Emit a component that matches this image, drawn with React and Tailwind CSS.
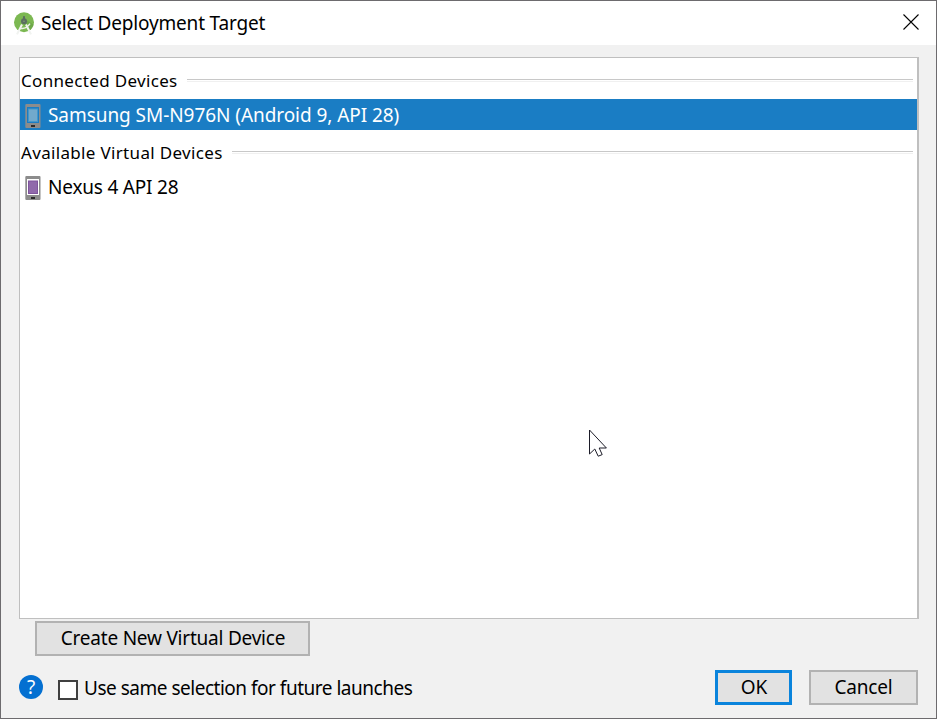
import React from "react";

function StudioLogo() {
  return (
    <svg width="20" height="23" viewBox="0 0 20 23" className="block shrink-0">
      <circle cx="10" cy="10.2" r="10" fill="#7cb852" />
      <path d="M12 8 L19.6 12.5 A10 10 0 0 1 15.5 18.5 L10 13Z" fill="#659f45" opacity="0.6" />
      <path d="M8 12.5 L3 22.4 M12 12.5 L17 22.4" stroke="#f1f3f0" strokeWidth="2.1" fill="none" />
      <path d="M6 16.2 Q12 17.5 16 11.6" stroke="#eef3ea" strokeWidth="1.5" fill="none" />
      <rect x="9" y="4.2" width="2" height="3" fill="#5b6e60" />
      <circle cx="10" cy="9.2" r="3" fill="#5b6e60" />
      <circle cx="10" cy="9.2" r="0.8" fill="#7f9a78" />
    </svg>
  );
}

function PhoneIcon({ bezel, screen, edge }) {
  return (
    <svg width="16" height="24" viewBox="0 0 16 24" className="mt-[2px] block shrink-0">
      <rect x="0.3" y="0" width="15.2" height="24" rx="1" fill="#8c8c8c" />
      <rect x="2" y="3" width="12" height="16" fill={bezel} />
      <rect x="3" y="4.5" width="10" height="13.5" fill={edge} />
      <rect x="4" y="5.5" width="8" height="11.5" fill={screen} />
      <rect x="6" y="21" width="4" height="2" fill="#2b2b2b" />
    </svg>
  );
}

function SectionHeader({ className, children }) {
  return (
    <div className="flex h-[41px] items-center pl-[1px] pr-[4px]">
      <span className={className}>{children}</span>
      <div className="mt-[3px] h-[3px] flex-1 border-t border-b border-t-[#c8c8c8] border-b-[#f0f0f0]" />
    </div>
  );
}

export default function App() {
  return (
    <div className="relative flex h-[719px] w-[937px] flex-col overflow-hidden border border-[#6d6b6e] bg-[#f1f1f1] font-['Noto_Sans','Open_Sans',sans-serif] text-[19px] leading-[24px] whitespace-nowrap text-black">
      <header className="flex h-[44px] shrink-0 items-center bg-white pr-[17px] pl-[13px]">
        <StudioLogo />
        <h1 className="-mt-[1px] ml-[7px] flex-1 tracking-[-0.17px]">Select Deployment Target</h1>
        <svg width="16" height="16" viewBox="0 0 16 16" className="-mt-[2px] block">
          <path d="M0.5 0.5 L15.5 15.5 M15.5 0.5 L0.5 15.5" stroke="#000" strokeWidth="1.1" />
        </svg>
      </header>

      <main className="mt-[12px] ml-[18px] h-[562px] w-[900px] shrink-0 border border-r-2 border-[#bfbfbf] bg-white">
        <SectionHeader className="mt-[5px] w-[166px] text-[17px] tracking-[0.33px]">Connected Devices</SectionHeader>
        <div className="flex h-[31px] items-center bg-[#1a7dc4] pl-[5px] text-white">
          <PhoneIcon bezel="#1a7dc4" edge="#4596c9" screen="#72a9cc" />
          <span className="mt-[1px] ml-[7px] tracking-[-0.06px]">Samsung SM-N976N (Android 9, API 28)</span>
        </div>
        <SectionHeader className="mt-[5px] w-[211px] text-[17px] tracking-[0.33px]">Available Virtual Devices</SectionHeader>
        <div className="flex h-[31px] items-center pl-[5px]">
          <PhoneIcon bezel="#ffffff" edge="#7e539c" screen="#9069ab" />
          <span className="mt-[1px] ml-[7px] tracking-[-0.2px]">Nexus 4 API 28</span>
        </div>
      </main>

      <div className="mt-[2px] ml-[34px] flex">
        <button className="h-[35px] w-[275px] border-2 border-[#b2b2b2] bg-[#e2e2e2] pb-[2px] pl-[1px] tracking-[-0.22px]">Create New Virtual Device</button>
      </div>

      <footer className="mt-[14px] flex h-[35px] pr-[18px] pl-[18px]">
        <div className="mt-[5px] flex h-6 w-6 items-center justify-center rounded-full bg-[#0470d1] text-[19px] text-white">?</div>
        <div className="mt-[10px] ml-[15px] h-5 w-5 border-2 border-[#404040] bg-white" />
        <span className="mt-[6px] ml-[6px] flex-1 tracking-[-0.49px]">Use same selection for future launches</span>
        <button className="h-[35px] w-[77px] border-3 border-[#0a84dc] bg-[#e2e2e2] pb-[2px] pl-[1px]">OK</button>
        <button className="ml-[17px] h-[35px] w-[109px] border-2 border-[#b2b2b2] bg-[#e2e2e2] pb-[2px] tracking-[-0.2px]">Cancel</button>
      </footer>

      <svg width="20" height="28" viewBox="0 0 20 28" className="absolute top-[428px] left-[588px]">
        <path d="M0.5 1 V25 L5.8 20 L9.2 27.2 L13.2 25.6 L10.2 19 H17.4 Z" fill="#fff" stroke="#1c1c28" strokeWidth="1" />
      </svg>
    </div>
  );
}
